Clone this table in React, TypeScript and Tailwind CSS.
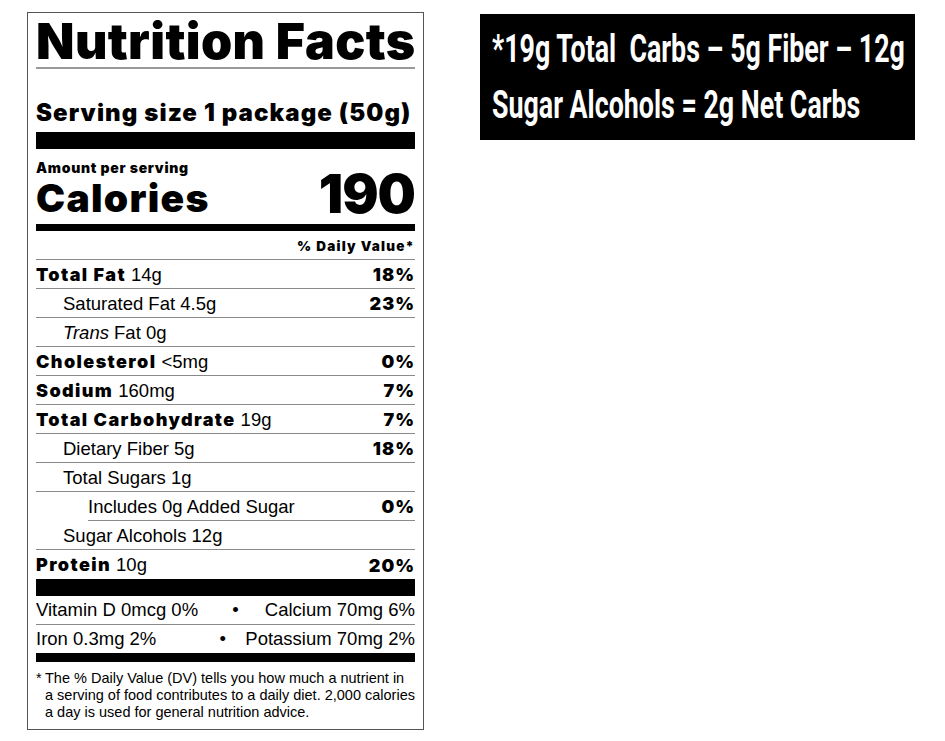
const black = "font-['Inter',_'Liberation_Sans',_sans-serif] font-black";

type Row = {
  bold?: string;
  label?: React.ReactNode;
  amount: string;
  dv?: string;
  indent?: 0 | 1 | 2;
  lineIndent?: boolean;
};

const rows: Row[] = [
  { bold: "Total Fat", amount: "14g", dv: "18%" },
  { label: "Saturated Fat", amount: "4.5g", dv: "23%", indent: 1 },
  { label: <><i>Trans</i> Fat</>, amount: "0g", indent: 1 },
  { bold: "Cholesterol", amount: "<5mg", dv: "0%" },
  { bold: "Sodium", amount: "160mg", dv: "7%" },
  { bold: "Total Carbohydrate", amount: "19g", dv: "7%" },
  { label: "Dietary Fiber", amount: "5g", dv: "18%", indent: 1 },
  { label: "Total Sugars", amount: "1g", indent: 1 },
  { label: "Includes 0g Added Sugar", amount: "", dv: "0%", indent: 2, lineIndent: true },
  { label: "Sugar Alcohols", amount: "12g", indent: 1 },
  { bold: "Protein", amount: "10g", dv: "20%" },
];

function NutrientRow({ row, last }: { row: Row; last: boolean }) {
  const pad = row.indent === 1 ? "pl-[27px]" : "";
  return (
    <div
      className={`flex h-[29px] items-center justify-between ${last ? "" : "border-b border-[#8a8a8a]"} ${
        row.lineIndent ? "ml-[52px]" : ""
      }`}
    >
      <div className={`whitespace-pre text-[18.5px] ${pad} pt-[1px]`}>
        {row.bold && <span className={`${black} text-[18px] tracking-[1.4px]`}>{row.bold} </span>}
        {row.label && <span>{row.label} </span>}
        <span>{row.amount}</span>
      </div>
      {row.dv && <div className={`${black} pt-[1px] text-[18px] tracking-[1px]`}>{row.dv}</div>}
    </div>
  );
}

function Label() {
  return (
    <div className="mt-[12px] ml-[27px] h-[718px] w-[397px] border border-[#555] bg-white px-[8px] font-['Liberation_Sans',_Arial,_sans-serif] text-black">
      <h1 className={`${black} -mt-[2px] h-[56px] text-[50px] leading-[60px] tracking-[0.4px] whitespace-nowrap`}>
        Nutrition Facts
      </h1>
      <div className="h-[2px] bg-[#999]" />
      <div className={`${black} mt-[31px] h-[25px] text-[24px] leading-[25px] tracking-[1.1px] whitespace-nowrap`}>
        Serving size 1 package (50g)
      </div>
      <div className="mt-[7px] h-[17px] bg-black" />
      <div className={`${black} mt-[12px] h-[14px] text-[14px] leading-[14px] tracking-[0.7px]`}>Amount per serving</div>
      <div className="flex h-[42px] items-end justify-between">
        <span className={`${black} text-[39px] leading-[38px] tracking-[1.3px]`}>Calories</span>
        <span className={`${black} text-[54px] leading-[46px] tracking-[-1px]`}>190</span>
      </div>
      <div className="mt-[7px] h-[7px] bg-black" />
      <div
        className={`${black} h-[29px] border-b border-[#8a8a8a] pt-[7px] text-right text-[13.5px] leading-[16px] tracking-[1.2px]`}
      >
        % Daily Value*
      </div>
      {rows.map((r, i) => (
        <NutrientRow key={i} row={r} last={i === rows.length - 1} />
      ))}
      <div className="h-[17px] bg-black" />
      <div className="flex h-[29px] items-center justify-between border-b border-[#8a8a8a] text-[18.5px]">
        <span>Vitamin D 0mcg 0%</span>
        <span className="pl-[8px]">•</span>
        <span>Calcium 70mg 6%</span>
      </div>
      <div className="flex h-[28px] items-center justify-between text-[18.5px]">
        <span>Iron 0.3mg 2%</span>
        <span className="pl-[44px]">•</span>
        <span>Potassium 70mg 2%</span>
      </div>
      <div className="h-[9px] bg-black" />
      <div className="mt-[8px] flex text-[14.5px] leading-[17px]">
        <span className="w-[9px] shrink-0">*</span>
        <p className="whitespace-nowrap">
          The % Daily Value (DV) tells you how much a nutrient in
          <br />
          a serving of food contributes to a daily diet. 2,000 calories
          <br />a day is used for general nutrition advice.
        </p>
      </div>
    </div>
  );
}

export default function App() {
  return (
    <div className="flex min-h-[741px] w-[945px] items-start overflow-hidden bg-white">
      <Label />
      <div className="mt-[14px] ml-[56px] flex h-[126px] w-[435px] shrink-0 flex-col justify-center overflow-hidden bg-black pl-[12px] font-['Roboto',_'Liberation_Sans',_sans-serif] text-[38px] font-bold leading-[56px] text-white">
        <div className="origin-left scale-x-[0.705] whitespace-pre">*19g Total  Carbs – 5g Fiber – 12g</div>
        <div className="origin-left scale-x-[0.705] whitespace-pre">Sugar Alcohols = 2g Net Carbs</div>
      </div>
    </div>
  );
}
